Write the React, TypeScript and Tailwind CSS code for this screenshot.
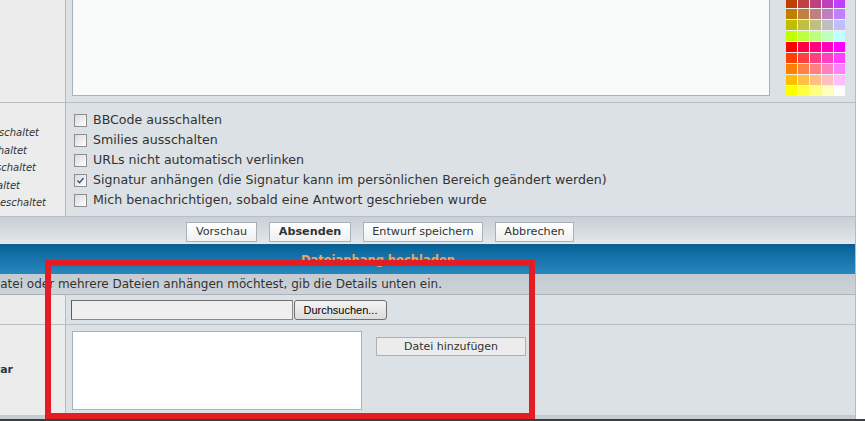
import React from "react";

const palette = [
  ["#bf4000", "#bf4040", "#bf4080", "#bf40bf", "#bf40ff"],
  ["#bf8000", "#bf8040", "#bf8080", "#bf80bf", "#bf80ff"],
  ["#bfbf00", "#bfbf40", "#bfbf80", "#bfbfbf", "#bfbfff"],
  ["#bfff00", "#bfff40", "#bfff80", "#bfffbf", "#bfffff"],
  ["#ff0000", "#ff0040", "#ff0080", "#ff00bf", "#ff00ff"],
  ["#ff4000", "#ff4040", "#ff4080", "#ff40bf", "#ff40ff"],
  ["#ff8000", "#ff8040", "#ff8080", "#ff80bf", "#ff80ff"],
  ["#ffbf00", "#ffbf40", "#ffbf80", "#ffbfbf", "#ffbfff"],
  ["#ffff00", "#ffff40", "#ffff80", "#ffffbf", "#ffffff"],
];

const status = [
  { text: "BBCode ist eingeschaltet", pad: "pr-[26px]" },
  { text: "[img] ist eingeschaltet", pad: "pr-[38px]" },
  { text: "[flash] ist ausgeschaltet", pad: "pr-[29px]" },
  { text: "[url] ist eingeschaltet", pad: "pr-[45px]" },
  { text: "Smilies sind eingeschaltet", pad: "pr-[19px]" },
];

const options = [
  { label: "BBCode ausschalten" },
  { label: "Smilies ausschalten" },
  { label: "URLs nicht automatisch verlinken" },
  { label: "Signatur anhängen (die Signatur kann im persönlichen Bereich geändert werden)", checked: true },
  { label: "Mich benachrichtigen, sobald eine Antwort geschrieben wurde" },
];

function Checkbox({ checked }: { checked?: boolean }) {
  return (
    <span className="mr-[6px] flex h-[13px] w-[13px] shrink-0 items-center justify-center border border-[#8e8f8f] bg-linear-to-br from-[#d9dadb] to-white">
      {checked ? (
        <svg viewBox="0 0 11 11" className="h-[9px] w-[9px]">
          <path d="M1.8 5.6 L4.3 8.2 L9.2 2.4" fill="none" stroke="#3c4d78" strokeWidth="1.7" />
        </svg>
      ) : null}
    </span>
  );
}

function BarButton({ label, width, bold }: { label: string; width: string; bold?: boolean }) {
  return (
    <button
      type="button"
      className={`${width} h-[20px] border border-[#a9b1b8] bg-linear-to-b from-white to-[#eef0f2] text-[11.2px] leading-none text-[#333] ${
        bold ? "font-bold" : ""
      }`}
    >
      {label}
    </button>
  );
}

export default function App() {
  return (
    <div className="relative h-[421px] w-[865px] overflow-hidden bg-white font-['DejaVu_Sans',sans-serif] text-[#333]">
      <div className="w-[856px] border-r border-[#b3bbc3]">
        {/* message + colour palette */}
        <div className="flex h-[103px] border-b border-[#b6bec6]">
          <div className="w-[66px] shrink-0 border-r border-[#b3bbc3] bg-[#ececec]" />
          <div className="flex flex-1 items-end overflow-hidden bg-[#dce1e5] pb-[6px] pl-[6px]">
            <div className="h-[140px] w-[698px] shrink-0 border border-[#a9b1b9] bg-[#f9fafa]" />
            <div className="ml-[16px] grid w-[59px] shrink-0 grid-cols-5 gap-[1px] bg-[#eef0f2]">
              {palette.flat().map((c, i) => (
                <div key={i} className="h-[10px]" style={{ backgroundColor: c }} />
              ))}
            </div>
          </div>
        </div>

        {/* options */}
        <div className="flex h-[114px] border-b border-[#b6bec6]">
          <div className="w-[66px] shrink-0 overflow-hidden border-r border-[#b3bbc3] bg-[#ececec] pt-[21px]">
            {status.map((s) => (
              <div
                key={s.text}
                className={`flex h-[17.5px] justify-end overflow-hidden text-[10px] italic leading-[17.5px] ${s.pad}`}
              >
                <span className="shrink-0 whitespace-nowrap">{s.text}</span>
              </div>
            ))}
          </div>
          <div className="flex-1 bg-[#dce1e5] pl-[8px] pt-[7px]">
            {options.map((o) => (
              <div key={o.label} className="flex h-[20px] items-center text-[12.6px] whitespace-nowrap">
                <Checkbox checked={o.checked} />
                <span>{o.label}</span>
              </div>
            ))}
          </div>
        </div>

        {/* buttons */}
        <div className="flex h-[27px] gap-[12px] border-b border-[#e6eaed] bg-linear-to-b from-[#c8cfd6] to-[#e2e6e9] pl-[186px] pt-[5px]">
          <BarButton label="Vorschau" width="w-[71px]" />
          <BarButton label="Absenden" width="w-[82px]" bold />
          <BarButton label="Entwurf speichern" width="w-[120px]" />
          <BarButton label="Abbrechen" width="w-[79px]" />
        </div>

        {/* attachment header */}
        <div className="flex h-[30px] items-center border-t-[3px] border-[#0d5f90] bg-linear-to-b from-[#07659c] to-[#2887bd] pl-[301px]">
          <span className="text-[11.5px] font-bold text-[#eba55e]">Dateianhang hochladen</span>
        </div>

        <div className="h-[21px] overflow-hidden border-b border-[#aab2ba] bg-linear-to-b from-[#c3cad1] to-[#cdd3d9]">
          <p className="-ml-[9px] whitespace-nowrap text-[12px] leading-[20px]">
            Datei oder mehrere Dateien anhängen möchtest, gib die Details unten ein.
          </p>
        </div>

        {/* file name */}
        <div className="flex h-[30px] border-b border-[#b6bec6]">
          <div className="w-[66px] shrink-0 border-r border-[#b3bbc3] bg-[#ececec]" />
          <div className="flex flex-1 bg-[#dce1e5] pl-[5px] pt-[5px]">
            <div className="h-[20px] w-[222px] border border-[#8a8a8a] border-l-[#5e5e5e] border-t-[#6e6e6e] bg-[#efefef]" />
            <button
              type="button"
              className="ml-[1px] h-[20px] w-[93px] rounded-[3px] border border-[#707070] bg-linear-to-b from-[#f4f4f4] to-[#dcdcdc] font-['Liberation_Sans',sans-serif] text-[11px] leading-none text-black"
            >
              Durchsuchen...
            </button>
          </div>
        </div>

        {/* file comment */}
        <div className="flex h-[91px] border-b border-[#c3cad0]">
          <div className="flex w-[66px] shrink-0 items-center justify-end overflow-hidden border-r border-[#b3bbc3] bg-[#ececec] pr-[52px]">
            <span className="shrink-0 whitespace-nowrap text-[11px] font-bold text-[#2c3645]">Dateikommentar</span>
          </div>
          <div className="flex flex-1 items-start bg-[#dce1e5] pl-[6px] pt-[6px]">
            <div className="h-[79px] w-[290px] border border-[#a9b1b9] bg-white" />
            <button
              type="button"
              className="ml-[14px] mt-[6px] h-[19px] w-[150px] border border-[#a9b1b9] bg-[#ececec] text-[11px] leading-none text-[#333]"
            >
              Datei hinzufügen
            </button>
          </div>
        </div>
        <div className="h-[3px] bg-[#c6ccd2]" />
      </div>
      <div className="h-[2px] w-[865px] bg-[#3a3d42]" />

      {/* highlight */}
      <div className="absolute left-[45px] top-[260px] h-[159px] w-[490px] border-[6px] border-[#e41d25]" />
    </div>
  );
}
